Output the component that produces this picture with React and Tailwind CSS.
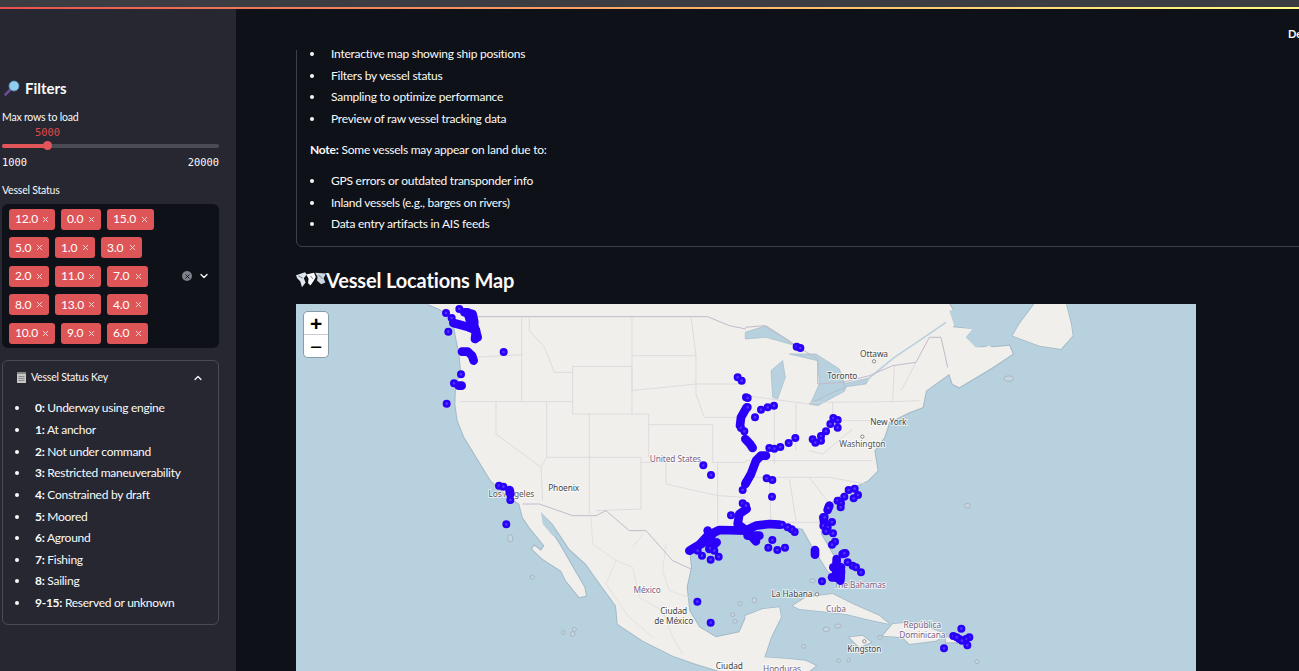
import React from "react";
import { ChevronDown, ChevronUp, X } from "lucide-react";

const features = [
  "Interactive map showing ship positions",
  "Filters by vessel status",
  "Sampling to optimize performance",
  "Preview of raw vessel tracking data",
];
const reasons = [
  "GPS errors or outdated transponder info",
  "Inland vessels (e.g., barges on rivers)",
  "Data entry artifacts in AIS feeds",
];
const statusKey = [
  ["0:", "Underway using engine"],
  ["1:", "At anchor"],
  ["2:", "Not under command"],
  ["3:", "Restricted maneuverability"],
  ["4:", "Constrained by draft"],
  ["5:", "Moored"],
  ["6:", "Aground"],
  ["7:", "Fishing"],
  ["8:", "Sailing"],
  ["9-15:", "Reserved or unknown"],
];
const tagRows = [
  [["12.0", "w-[46px]"], ["0.0", "w-[40px]"], ["15.0", "w-[47px]"]],
  [["5.0", "w-[40px]"], ["1.0", "w-[40px]"], ["3.0", "w-[41px]"]],
  [["2.0", "w-[40px]"], ["11.0", "w-[46px]"], ["7.0", "w-[41px]"]],
  [["8.0", "w-[40px]"], ["13.0", "w-[46px]"], ["4.0", "w-[41px]"]],
  [["10.0", "w-[46px]"], ["9.0", "w-[40px]"], ["6.0", "w-[41px]"]],
];

// map geometry is traced at 3x: west half and east half each 1350 wide
const westLand =
  "395,0 430,15 470,40 480,100 490,150 495,200 480,250 478,300 485,350 505,400 530,440 560,490 585,530 610,555 640,580 670,600 680,640 700,670 745,725 735,740 715,725 708,735 740,765 795,800 810,830 850,880 870,875 865,850 830,790 790,720 750,660 735,625 770,660 820,735 870,780 905,830 960,905 965,960 1040,1010 1130,1055 1200,1080 1270,1101 1352,1101 1352,935 1330,985 1260,1000 1210,970 1180,920 1172,850 1185,790 1180,745 1230,700 1290,670 1352,690 1352,0";
const eastLand =
  "-2,0 610,0 640,50 620,70 680,75 660,100 690,130 740,130 790,125 800,150 740,190 640,250 620,240 610,210 540,260 530,310 490,325 430,355 415,400 385,440 395,500 365,530 300,560 250,600 225,650 225,690 265,760 270,820 245,800 195,720 170,675 100,660 40,665 -2,690";
const eastIslands = [
  "800,95 820,60 865,0 960,0 975,60 980,95 945,135 880,125",
  "-2,1101 -2,935 50,915 100,910 105,940 75,1000 55,1060 130,1065 180,1070 210,1085 190,1101",
  "140,905 180,880 260,870 320,900 400,935 430,960 360,945 300,930 210,920 160,915",
  "410,995 440,960 500,955 600,990 570,1010 490,1020 470,1000",
  "310,1000 350,995 375,1015 340,1030",
  "600,1000 650,1000 650,1015 600,1015",
];
const lakes = [
  "-2,85 60,65 130,110 150,125 60,100 -2,105",
  "80,280 75,200 110,170 118,220 95,285",
  "130,150 210,150 280,195 300,250 215,290 195,295 220,240 215,170",
  "190,300 260,265 300,250 295,262 215,305",
  "290,240 370,222 360,240 300,248",
];
const westBorders = [
  "677,40 677,292", "530,160 680,152", "490,293 830,293", "600,293 600,390 735,490 740,590",
  "752,293 752,460 735,490", "880,330 880,630", "830,187 830,330 1058,330 1058,460",
  "830,187 1008,187 1008,330", "1008,40 1008,260", "1008,155 1200,155", "1008,260 1200,240 1350,240",
  "1058,362 1250,362", "752,460 1035,460 1035,615 900,620", "700,40 700,80 745,130 775,205 830,205",
  "1200,155 1200,270 1225,340 1350,340", "1250,362 1250,475 1350,475",
  "1035,475 1110,475 1110,540 1265,575 1350,580", "1265,475 1265,660", "1185,40 1200,155",
];
const westCountry = [
  "540,38 1235,38 1300,65 1350,75",
  "680,600 730,600 830,635 900,635 930,620 1000,680 1050,680 1130,770 1185,795",
];
const mexicoStates = [
  "885,640 890,720 960,770 1010,790 1030,880", "1010,730 1040,690", "960,770 930,840 1000,940",
  "1110,720 1100,800 1120,860 1180,880", "1030,880 1100,920 1130,1000 1160,1050", "1000,940 1070,1000",
];
const eastBorders = [
  "-2,275 190,300", "150,300 150,440", "85,300 85,480", "260,295 260,350", "190,295 440,293 520,290",
  "445,185 440,293", "510,175 465,260", "260,350 400,350", "-2,520 250,520 360,540", "130,525 150,650",
  "70,525 75,655", "-2,655 225,655", "-2,470 380,470", "190,440 230,450 320,375", "190,520 250,600",
];
const eastCountry = [
  "-2,70 55,65 150,125 215,165 215,240 290,235 370,215 440,185 510,175 550,100 585,100 605,190",
];
const westDots = [
  [450, 27], [490, 15], [467, 42], [457, 83], [623, 144], [495, 211], [474, 238], [452, 299], [609, 545],
  [622, 548], [643, 588], [631, 661], [1222, 484], [1245, 513], [1325, 220], [1337, 230], [1204, 893],
  [1244, 956], [1305, 634], [1340, 558], [1350, 280], [1350, 535], [1340, 598], [1218, 755], [1244, 767],
  [1268, 758], [1243, 733], [1255, 740], [1205, 740], [1335, 372], [1345, 382],
];
const westRuns = [
  "505,25 530,30 535,55 520,70 540,80 537,105", "515,25 525,60", "530,50 545,100", "472,57 495,63 520,70",
  "498,143 515,143 528,155 533,170", "488,245 497,245", "641,558 643,570", "1180,740 1210,722 1235,695 1270,678 1352,680",
  "1190,735 1225,715 1250,690", "1235,680 1245,700", "1240,735 1262,715", "1352,310 1335,340 1332,365",
  "1352,615 1330,630 1325,660 1352,680",
];
const eastDots = [
  [152, 128], [163, 132], [5, 282], [5, 310], [45, 317], [65, 310], [84, 305], [27, 340], [262, 342],
  [275, 348], [253, 360], [275, 371], [240, 382], [225, 396], [225, 410], [200, 406], [208, 416], [148, 402],
  [128, 417], [103, 429], [85, 434], [70, 432], [62, 523], [79, 528], [78, 578], [0, 605], [308, 558],
  [326, 554], [336, 573], [323, 583], [295, 578], [275, 590], [285, 598], [284, 610], [247, 612], [236, 640],
  [258, 654], [232, 665], [245, 670], [240, 682], [261, 688], [267, 713], [258, 722], [79, 708], [67, 731],
  [94, 738], [117, 731], [146, 684], [137, 676], [125, 670], [108, 662], [228, 832], [295, 748], [305, 775],
  [320, 785], [330, 790], [345, 805], [646, 974], [594, 1033], [664, 1024], [670, 1000], [622, 996], [640, 1005],
  [660, 1005], [648, 1010], [632, 1000],
];
const eastRuns = [
  "-2,405 12,420 20,432", "-2,540 15,510 30,470 45,455 60,455", "-2,680 30,665 70,660 100,662",
  "-2,680 15,695 30,712", "5,695 40,695", "207,738 207,752", "272,765 270,820", "285,800 283,830",
  "258,820 283,820", "290,750 298,748", "262,790 285,790", "232,640 236,665", "250,605 245,618",
];
const islandRings = [
  [788, 224, 14, 8], [664, 605, 9, 7], [200, 830, 8, 6], [25, 889, 7, 8], [241, 976, 10, 7], [276, 966, 10, 6],
  [173, 1027, 6, 6], [278, 1070, 6, 5], [308, 1069, 5, 5], [693, 1073, 6, 6], [402, 1000, 7, 6],
];
const westRings = [
  [643, 703, 8, 11], [709, 820, 6, 6], [802, 985, 5, 6], [835, 976, 6, 6], [830, 990, 7, 7], [1332, 899, 6, 6],
  [1310, 932, 6, 6], [1317, 952, 6, 6],
];
const westLabels = [
  ["United States", 1138, 474, "#7a6383"], ["Phoenix", 803, 561, "#444"], ["Los Angeles", 646, 580, "#555"],
  ["México", 1053, 868, "#7a6383"], ["Ciudad", 1133, 929, "#444"], ["de México", 1133, 959, "#444"], ["Ciudad", 1300, 1095, "#444"],
];
const eastLabels = [
  ["Ottawa", 384, 158, "#444"], ["Toronto", 289, 226, "#444"], ["New York", 427, 362, "#444"], ["Washington", 349, 430, "#555"],
  ["The Bahamas", 341, 852, "#7a6383"], ["La Habana", 138, 880, "#444"], ["Cuba", 270, 923, "#7a6383"],
  ["República", 529, 971, "#7a6383"], ["Dominicana", 529, 1001, "#7a6383"], ["Kingston", 355, 1044, "#444"], ["Honduras", 108, 1103, "#7a6383"],
];
const capitals = [[384, 172], [349, 398], [213, 871], [355, 1012]];

function Lines({ items, color, width }) {
  return items.map((p, i) => <polyline key={i} points={p} fill="none" stroke={color} strokeWidth={width} strokeLinejoin="round" />);
}

function Runs({ items }) {
  return items.map((p, i) => (
    <polyline key={i} points={p} fill="none" stroke="#2a00f8" strokeWidth="26" strokeLinecap="round" strokeLinejoin="round" />
  ));
}

function Dots({ items }) {
  return items.map(([x, y], i) => <circle key={i} cx={x} cy={y} r="8" fill="#4c38ff" stroke="#2a00f8" strokeWidth="8" />);
}

function Rings({ items }) {
  return items.map(([x, y, rx, ry], i) => <ellipse key={i} cx={x} cy={y} rx={rx} ry={ry} fill="#c6d5de" stroke="#9fb0bd" strokeWidth="2.5" />);
}

function Labels({ items }) {
  return items.map(([t, x, y, color]) => (
    <text
      key={t + x}
      x={x}
      y={y}
      textAnchor="middle"
      fill={color}
      stroke="#ffffffcc"
      strokeWidth="5"
      paintOrder="stroke"
      fontFamily="'Noto Sans', sans-serif"
      fontSize="25"
    >
      {t}
    </text>
  ));
}

function VesselMap() {
  return (
    <svg width="900" height="367" viewBox="0 0 2700 1101" className="block">
      <rect width="2700" height="1101" fill="#b8d1de" />
      {/* coast halo first, then the fills so the seam between halves stays hidden */}
      <polygon points={westLand} fill="none" stroke="#a3b9c8" strokeWidth="6" />
      <g transform="translate(1350 0)">
        <polygon points={eastLand} fill="none" stroke="#a3b9c8" strokeWidth="6" />
        {eastIslands.map((p) => (
          <polygon key={p} points={p} fill="none" stroke="#a3b9c8" strokeWidth="5" />
        ))}
      </g>
      <polygon points={westLand} fill="#f1efeb" />
      <g transform="translate(1350 0)">
        <polygon points={eastLand} fill="#f1efeb" />
        {eastIslands.map((p) => (
          <polygon key={p} points={p} fill="#f1efeb" />
        ))}
        {lakes.map((p) => (
          <polygon key={p} points={p} fill="#b8d1de" stroke="#a3b9c8" strokeWidth="2" />
        ))}
        <polyline points="360,230 445,160 520,110 600,55" fill="none" stroke="#b8d1de" strokeWidth="5" />
        <polygon points="610,20 690,0 760,0 800,60 770,115 690,130 660,100 680,75 625,65" fill="#b8d1de" />
        <polygon points="680,140 730,125 745,135 700,165" fill="#f1efeb" />
        <Lines items={eastBorders} color="#dbd5dc" width="2.5" />
        <Lines items={eastCountry} color="#c5b9ca" width="3" />
        <Rings items={islandRings} />
      </g>
      <Lines items={westBorders} color="#dbd5dc" width="2.5" />
      <Lines items={mexicoStates} color="#ddd8de" width="2" />
      <Lines items={westCountry} color="#c5b9ca" width="3" />
      <Rings items={westRings} />
      <polygon points="735,625 770,665 790,700 770,695 740,660" fill="#b8d1de" />
      <Labels items={westLabels} />
      <g transform="translate(1350 0)">
        <Labels items={eastLabels} />
        {capitals.map(([x, y]) => (
          <circle key={x} cx={x} cy={y} r="5" fill="#fff" stroke="#555" strokeWidth="2" />
        ))}
      </g>
      <Runs items={westRuns} />
      <Dots items={westDots} />
      <g transform="translate(1350 0)">
        <Runs items={eastRuns} />
        <Dots items={eastDots} />
      </g>
    </svg>
  );
}

function Bullet({ children }) {
  return (
    <li className="flex h-[21.7px] items-center">
      <span className="w-[21px] shrink-0">
        <span className="block h-[4px] w-[4px] rounded-full bg-[#fafafa]" />
      </span>
      <span className="whitespace-nowrap">{children}</span>
    </li>
  );
}

function SearchEmoji() {
  return (
    <svg width="16" height="16" viewBox="0 0 16 16" className="shrink-0">
      <path d="M7 9 L1.5 14.5" stroke="#6d4a94" strokeWidth="2.6" strokeLinecap="round" />
      <circle cx="10" cy="6" r="5" fill="#8fd0ef" stroke="#5f87a8" strokeWidth="0.8" />
    </svg>
  );
}

function NotebookEmoji() {
  return (
    <svg width="9" height="11" viewBox="0 0 9 11" className="shrink-0">
      <rect width="9" height="11" fill="#c9c7c4" />
      <rect width="9" height="2" fill="#8a8886" />
      <path d="M1.5 4.5h6M1.5 6.5h6M1.5 8.5h6" stroke="#77777a" strokeWidth="0.8" />
    </svg>
  );
}

function MapEmoji() {
  return (
    <svg width="30" height="18" viewBox="0 0 100 60" className="shrink-0">
      <polygon points="0,14 30,4 36,12 26,24 32,38 20,54 14,34 4,24" fill="#dfe6ec" />
      <polygon points="34,12 60,6 66,20 58,34 48,48 40,40 42,26" fill="#fbfcfd" />
      <polygon points="64,6 100,8 92,24 98,38 84,44 70,32 72,20" fill="#ccd5dd" />
      <path d="M8 16 L22 24 M48 16 L56 26 M76 14 L88 26" stroke="#5d6772" strokeWidth="3" />
    </svg>
  );
}

export default function App() {
  return (
    <div className="flex h-screen w-full flex-col overflow-hidden bg-[#0e1117] font-['Lato',sans-serif] text-[#fafafa]">
      <div className="h-[7px] bg-[#3c3c43]" />
      <div className="h-[2px] bg-gradient-to-r from-[#e8504f] to-[#fffd80]" />
      <div className="flex min-h-0 flex-1">
        <aside className="w-[236px] shrink-0 bg-[#262730] pl-[2px] pt-[67px]">
          <div className="w-[217px]">
            <div className="flex h-6 items-center gap-[5px] pl-[2px] text-[15px] font-bold">
              <SearchEmoji />
              Filters
            </div>
            <div className="mt-[9px] h-4 text-[10.5px] leading-4 tracking-[-0.2px]">Max rows to load</div>
            <div className="font-['DejaVu_Sans_Mono',monospace] text-[10.4px]">
              <div className="h-[14px] pl-[33px] leading-[14px] text-[#e0474c]">5000</div>
              <div className="relative mt-[5px] h-[4px] rounded-sm bg-[#4a4b55]">
                <div className="h-[4px] w-[46px] rounded-sm bg-[#e25558]" />
                <div className="absolute left-[41px] top-[-3px] h-[9px] w-[9px] rounded-full bg-[#e25558]" />
              </div>
              <div className="mt-[7px] flex h-[14px] justify-between leading-[14px]">
                <span>1000</span>
                <span>20000</span>
              </div>
            </div>
            <div className="mt-[13px] h-4 text-[10.5px] leading-4 tracking-[-0.2px]">Vessel Status</div>
            <div className="mt-[6px] flex h-[144px] items-center rounded-md bg-[#0e1117] pl-[7px]">
              <div className="flex w-[168px] flex-col gap-[7.5px]">
                {tagRows.map((row, i) => (
                  <div key={i} className="flex gap-[6px]">
                    {row.map(([label, width]) => (
                      <span key={label} className={`flex h-[21px] items-center justify-between rounded-[3px] bg-[#de5558] pl-[6px] pr-[5px] text-[12px] tracking-[-0.2px] text-white ${width}`}>
                        {label}
                        <X size={9} strokeWidth={2.5} className="text-[#f7dcdc]" />
                      </span>
                    ))}
                  </div>
                ))}
              </div>
              <span className="ml-[5px] flex h-[10px] w-[10px] items-center justify-center rounded-full bg-[#7d7f8a]">
                <X size={7} strokeWidth={3} className="text-[#0e1117]" />
              </span>
              <ChevronDown size={12} strokeWidth={2.5} className="ml-[6px] text-white" />
            </div>
            <div className="mt-[12px] h-[265px] rounded-md border border-[#4a4b55]">
              <div className="flex h-[33px] items-center pl-[14px] pr-[14px] text-[10.5px] tracking-[-0.2px]">
                <NotebookEmoji />
                <span className="ml-[5px] flex-1">Vessel Status Key</span>
                <ChevronUp size={12} strokeWidth={2.5} />
              </div>
              <ul className="mt-[3.5px] pl-[12px] text-[12px] tracking-[-0.27px]">
                {statusKey.map(([k, v]) => (
                  <li key={k} className="flex h-[21.65px] items-center">
                    <span className="w-[20px] shrink-0">
                      <span className="block h-[4px] w-[4px] rounded-full bg-[#fafafa]" />
                    </span>
                    <span className="whitespace-nowrap"><b className="font-bold">{k}</b> {v}</span>
                  </li>
                ))}
              </ul>
            </div>
          </div>
        </aside>
        <main className="flex min-w-0 flex-1 flex-col">
          <div className="h-[41px] shrink-0 overflow-hidden pl-[1052px] pt-[17px] text-[11px] font-bold leading-4 text-[#fafafa]">
            <span className="whitespace-nowrap">Deploy</span>
          </div>
          <div className="min-h-0 flex-1 overflow-hidden pl-[60px] text-[12px] tracking-[-0.25px]">
            <div className="mt-[-8px] w-[1100px] rounded-b-md border border-[#3f4047] pb-[11px] pl-[13px]">
              <ul>
                {features.map((f) => (
                  <Bullet key={f}>{f}</Bullet>
                ))}
              </ul>
              <p className="mt-[9.3px] flex h-[21.7px] items-center whitespace-nowrap">
                <b className="mr-[3px] font-bold">Note:</b> Some vessels may appear on land due to:
              </p>
              <ul className="mt-[9.3px]">
                {reasons.map((r) => (
                  <Bullet key={r}>{r}</Bullet>
                ))}
              </ul>
            </div>
            <h2 className="mt-[18px] flex h-[30px] items-center text-[20px] font-bold tracking-[-0.15px]">
              <MapEmoji />
              Vessel Locations Map
            </h2>
            <div className="relative mt-[9px] h-[367px] w-[900px] overflow-hidden">
              <VesselMap />
              <div className="absolute left-[8px] top-[8px] flex w-[24px] flex-col rounded-[4px] bg-white text-black shadow-[0_0_0_1px_rgba(0,0,0,0.25)]">
                <span className="flex h-[23px] items-center justify-center border-b border-[#ccc] font-['Liberation_Sans',sans-serif] text-[21px] font-bold leading-none">+</span>
                <span className="flex h-[22px] items-center justify-center font-['Liberation_Sans',sans-serif] text-[21px] leading-none">−</span>
              </div>
            </div>
          </div>
        </main>
      </div>
    </div>
  );
}
